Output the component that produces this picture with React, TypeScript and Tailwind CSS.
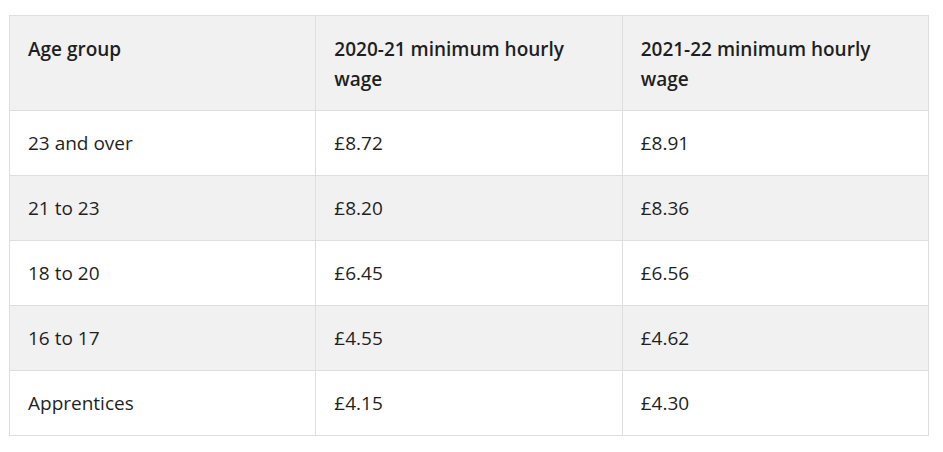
const rows = [
  ["23 and over", "£8.72", "£8.91"],
  ["21 to 23", "£8.20", "£8.36"],
  ["18 to 20", "£6.45", "£6.56"],
  ["16 to 17", "£4.55", "£4.62"],
  ["Apprentices", "£4.15", "£4.30"],
];

export default function App() {
  return (
    <div className="bg-white w-[943px] h-[452px] pt-[15px] pl-[9px] font-['Open_Sans',sans-serif] text-[#1f1f1f]">
      <table className="w-[920px] table-fixed border-collapse text-[19px] leading-[30px]">
        <thead>
          <tr className="bg-[#f1f1f1]">
            <th className="border border-[#dedede] text-left align-top font-semibold px-[18px] pt-[18px] pb-[16px]">
              Age group
            </th>
            <th className="border border-[#dedede] text-left align-top font-semibold px-[18px] pt-[18px] pb-[16px]">
              2020-21 minimum hourly wage
            </th>
            <th className="border border-[#dedede] text-left align-top font-semibold px-[18px] pt-[18px] pb-[16px]">
              2021-22 minimum hourly wage
            </th>
          </tr>
        </thead>

        <tbody>
          {rows.map((row, i) => (
            <tr
              key={row[0]}
              className={i % 2 === 1 ? "bg-[#f1f1f1]" : "bg-white"}
            >
              {row.map((cell, j) => (
                <td
                  key={j}
                  className="border border-[#dedede] px-[18px] py-[17px]"
                >
                  {cell}
                </td>
              ))}
            </tr>
          ))}
        </tbody>
      </table>
    </div>
  );
}
